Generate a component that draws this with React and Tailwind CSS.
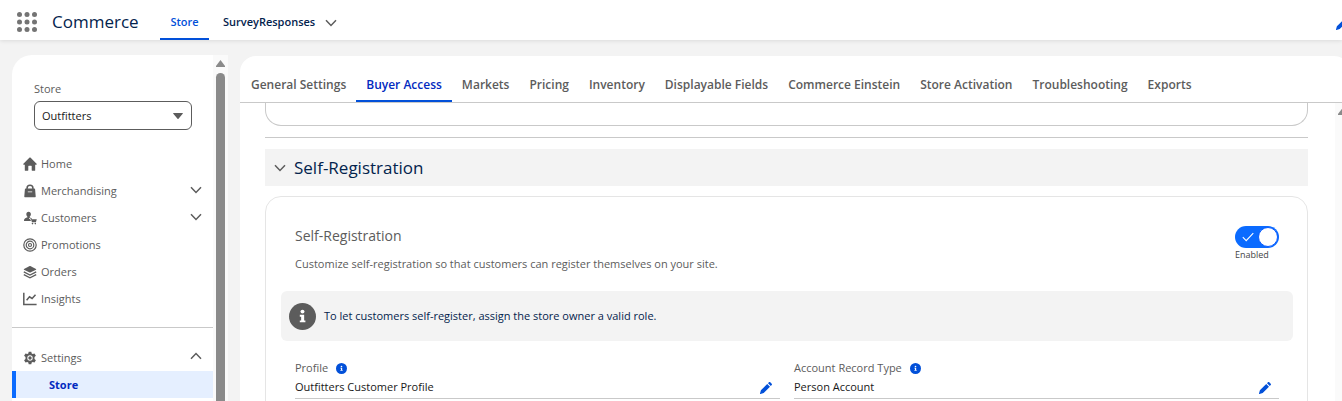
import React, { useState } from "react";

function ChevronDown({ className = "", strokeWidth = 1.5 }) {
  return (
    <svg viewBox="0 0 12 12" className={className} fill="none" stroke="currentColor" strokeWidth={strokeWidth} aria-hidden="true">
      <path d="M1 3.2 6 8.4 11 3.2" />
    </svg>
  );
}

function ChevronUp({ className = "" }) {
  return (
    <svg viewBox="0 0 12 12" className={className} fill="none" stroke="currentColor" strokeWidth="1.5" aria-hidden="true">
      <path d="M1 8.8 6 3.6 11 8.8" />
    </svg>
  );
}

function Pencil({ className = "" }) {
  return (
    <svg viewBox="0 0 12 12" className={className} fill="currentColor" aria-hidden="true">
      <path d="M.9 8.3 7.2 2l2.8 2.8-6.3 6.3L.4 12c-.3.1-.5-.1-.4-.4z" />
      <path d="M8 1.2 8.9.3c.4-.4 1-.4 1.4 0l1.4 1.4c.4.4.4 1 0 1.4l-.9.9z" />
    </svg>
  );
}

function Info({ className = "" }) {
  return (
    <svg viewBox="0 0 26 26" className={className} aria-hidden="true">
      <circle cx="13" cy="13" r="13" fill="currentColor" />
      <circle cx="13" cy="8.3" r="1.9" fill="#fff" />
      <path d="M10.4 11.4h4.2v5.4h1.2v1.8h-5.4v-1.8h1.3v-3.6h-1.3z" fill="#fff" />
    </svg>
  );
}

function HomeIcon() {
  return (
    <svg viewBox="0 0 14 14" className="size-3.5" fill="currentColor" aria-hidden="true">
      <path d="M7.4.6a.6.6 0 0 0-.8 0L.4 6.8c-.4.4-.2.9.3.9h1.1v5.5c0 .4.2.6.6.6h2.4c.3 0 .5-.2.5-.5V9.2c0-.3.2-.5.5-.5h2.4c.3 0 .5.2.5.5v4.1c0 .3.2.5.5.5h2.4c.4 0 .6-.2.6-.6V7.7h1.1c.5 0 .7-.5.3-.9z" />
    </svg>
  );
}

function BagIcon() {
  return (
    <svg viewBox="0 0 14 14" className="size-3.5" fill="currentColor" aria-hidden="true">
      <path
        fillRule="evenodd"
        d="M3.3 4.6V4.2a3.7 3.7 0 0 1 7.4 0v.4h.6c.4 0 .8.3.8.7l.6 6.9c.1.6-.3 1.1-.9 1.1H2.2c-.6 0-1-.5-.9-1.1l.6-6.9c0-.4.4-.7.8-.7zm1.5 0h4.4V4.2a2.2 2.2 0 0 0-4.4 0zM4.8 7.4v.8h4.4v-.8z"
      />
    </svg>
  );
}

function CustomersIcon() {
  return (
    <svg viewBox="0 0 14 14" className="size-3.5" fill="currentColor" aria-hidden="true">
      <path d="M5.6.8c1.4 0 2.3 1 2.3 2.4 0 .9-.4 1.7-1 2.2-.4.4-.3.9.2 1.1l.8.4H6.2v1.2h.9l.9 2H1.6c-.4 0-.6-.2-.6-.6 0-1.5.9-2.100 2.900-2.900.6-.2.7-.8.3-1.200-.5-.5-.9-1.300-.9-2.200C3.300 1.800 4.200.8 5.600.8z" />
      <path d="M7.2 7.2h1.500l.4 1h4.700l-.9 3H8.900L8 8.100h-.8z" />
      <circle cx="9.5" cy="12.600" r=".8" />
      <circle cx="12.300" cy="12.600" r=".8" />
    </svg>
  );
}

function TargetIcon() {
  return (
    <svg viewBox="0 0 14 14" className="size-3.5" fill="none" stroke="currentColor" strokeWidth="1.2" aria-hidden="true">
      <circle cx="7" cy="7" r="6.2" />
      <circle cx="7" cy="7" r="3.8" />
      <circle cx="7" cy="7" r="1.5" />
    </svg>
  );
}

function LayersIcon() {
  return (
    <svg viewBox="0 0 14 14" className="size-3.5" fill="currentColor" aria-hidden="true">
      <path d="M6.7 1.1 1 4c-.3.2-.3.5 0 .7l5.7 2.8h.6L13 4.7c.3-.2.3-.5 0-.7L7.3 1.1z" />
      <path d="M.8 6.9 7 10l6.2-3.1M.8 9.7 7 12.8l6.2-3.1" fill="none" stroke="currentColor" strokeWidth="1.3" />
    </svg>
  );
}

function InsightsIcon() {
  return (
    <svg viewBox="0 0 14 14" className="size-3.5" fill="none" stroke="currentColor" strokeWidth="1.5" aria-hidden="true">
      <path d="M.8.8v11.7h12.8" />
      <path d="M3.6 8.3 6.5 4.8l2.6 1.7 3.4-3.7" />
    </svg>
  );
}

function GearIcon() {
  return (
    <svg viewBox="0 0 14 14" className="size-3.5" fill="currentColor" aria-hidden="true">
      <path fillRule="evenodd" d="M5.7.7h2.6l.4 1.8 1 .6 1.8-.6 1.4 2.3-1.4 1.3v1.8l1.4 1.3-1.4 2.3-1.8-.6-1 .6-.4 1.8H5.7l-.4-1.8-1-.6-1.8.6-1.4-2.3 1.4-1.3V6.1L1.1 4.8l1.4-2.3 1.8.6 1-.6zM7 4.3a2.7 2.7 0 1 0 0 5.4 2.7 2.7 0 0 0 0-5.4z" />
      <circle cx="7" cy="7" r="1.7" />
    </svg>
  );
}

function Waffle() {
  const steps = [2.5, 10, 17.5];
  return (
    <svg viewBox="0 0 20 20" className="size-5 text-[#747474]" fill="currentColor" aria-hidden="true">
      {steps.map((y) => steps.map((x) => <circle key={`${x}-${y}`} cx={x} cy={y} r="2.5" />))}
    </svg>
  );
}

const NAV = [
  { label: "Home", Icon: HomeIcon },
  { label: "Merchandising", Icon: BagIcon, expandable: true },
  { label: "Customers", Icon: CustomersIcon, expandable: true },
  { label: "Promotions", Icon: TargetIcon },
  { label: "Orders", Icon: LayersIcon },
  { label: "Insights", Icon: InsightsIcon },
];

const TABS = [
  "General Settings",
  "Buyer Access",
  "Markets",
  "Pricing",
  "Inventory",
  "Displayable Fields",
  "Commerce Einstein",
  "Store Activation",
  "Troubleshooting",
  "Exports",
];

function Header() {
  return (
    <header className="z-10 flex h-10 shrink-0 items-stretch bg-white pl-[17px] shadow-[0_1px_4px_rgba(0,0,0,0.1)]">
      <button type="button" aria-label="App Launcher" className="mr-[15px] flex items-center pt-1">
        <Waffle />
      </button>
      <span className="flex w-27 items-center pt-1 text-[17px] text-[#03234d]">Commerce</span>
      <nav className="flex flex-1 items-stretch text-[11px] font-semibold">
        <a href="#store" className="flex w-[49px] items-center justify-center border-b-2 border-[#0250d9] pt-1.5 text-[#0250d9]">
          Store
        </a>
        <a href="#responses" className="flex items-center pt-1 pl-3.5 text-[#03234d]">
          SurveyResponses
        </a>
        <button type="button" aria-label="SurveyResponses list" className="pt-1.5 pl-2.5 text-[#5c5c5c]">
          <ChevronDown className="size-3" />
        </button>
      </nav>
      <button type="button" aria-label="Edit navigation" className="-mr-1.5 flex items-center pt-2 text-[#0250d9]">
        <Pencil className="size-3" />
      </button>
    </header>
  );
}

function Sidebar() {
  return (
    <aside className="ml-3 flex w-[216px] shrink-0 overflow-hidden rounded-tl-[20px] bg-white">
      <div className="flex-1 text-[11px] text-[#5c5c5c]">
        <div className="px-[22px] pt-[25px] pr-[21px]">
          <label htmlFor="store" className="block leading-[18px]">
            Store
          </label>
          <div className="relative mt-[3px]">
            <select id="store" className="block h-[29px] w-full appearance-none rounded-md border border-[#5c5c5c] bg-white px-[7px] pt-0.5 text-[11px] text-[#181818]">
              <option>Outfitters</option>
            </select>
            <svg viewBox="0 0 10 6" className="pointer-events-none absolute top-3 right-[9px] h-1.5 w-2.5" fill="#5c5c5c" aria-hidden="true">
              <path d="M.6 0h8.800c.5 0 .7.5.3.8L5.500 5.700c-.3.3-.7.300-1 0L.3.800C-.1.500.100 0 .6 0z" />
            </svg>
          </div>
        </div>
        <ul className="mt-[21px]">
          {NAV.map(({ label, Icon, expandable }) => (
            <li key={label}>
              <a href={`#${label.toLowerCase()}`} className="flex h-[27px] items-center px-[11px] pb-px">
                <Icon />
                <span className="flex-1 pt-px pl-1">{label}</span>
                {expandable && <ChevronDown className="mb-0.5 size-3" />}
              </a>
            </li>
          ))}
        </ul>
        <div className="mt-[14px] border-t border-[#c9c9c9] pt-4">
          <button type="button" aria-expanded="true" className="flex h-[27px] w-full items-center px-[11px] text-left">
            <GearIcon />
            <span className="flex-1 pt-px pl-1">Settings</span>
            <ChevronUp className="mb-1 size-3" />
          </button>
          <a href="#settings-store" aria-current="page" className="flex h-[27px] items-center border-l-4 border-[#0b6bff] bg-[#e5efff] pt-0.5 pl-[33px] font-bold text-[#022ac0]">
            Store
          </a>
        </div>
      </div>
      <div className="flex w-[15px] flex-col items-center bg-[#fafafa] pt-[5px]" aria-hidden="true">
        <svg viewBox="0 0 9 7" className="h-[7px] w-[9px] shrink-0" fill="#8a8a8a">
          <path d="M4.5 0 9 6v1H0V6z" />
        </svg>
        <div className="mt-1.5 w-[9px] flex-1 rounded-t-full bg-[#8a8a8a]" />
      </div>
    </aside>
  );
}

function Tabs() {
  return (
    <nav className="flex h-[47px] shrink-0 items-stretch border-b border-[#c9c9c9] pl-px text-xs font-semibold text-[#5c5c5c]">
      {TABS.map((tab) =>
        tab === "Buyer Access" ? (
          <a key={tab} href="#buyer-access" aria-current="page" className="flex items-center border-b-2 border-[#0250d9] px-2.5 pt-3.5 whitespace-nowrap text-[#022ac0]">
            {tab}
          </a>
        ) : (
          <a key={tab} href={`#${tab.toLowerCase().replace(" ", "-")}`} className="flex items-center border-b-2 border-transparent px-2.5 pt-3.5 whitespace-nowrap">
            {tab}
          </a>
        )
      )}
    </nav>
  );
}

function Field({ label, value }) {
  return (
    <div className="flex-1 border-b border-[#c9c9c9]">
      <dt className="flex h-5 items-center text-[11px] text-[#5c5c5c]">
        {label}
        <button type="button" aria-label={`${label} help`} className="ml-2 text-[#0250d9]">
          <Info className="size-[11px]" />
        </button>
      </dt>
      <dd className="flex h-5 items-center justify-between pr-2 text-[11px] text-[#181818]">
        <span className="pb-0.5">{value}</span>
        <button type="button" aria-label={`Edit ${label}`} className="text-[#0250d9]">
          <Pencil className="size-3" />
        </button>
      </dd>
    </div>
  );
}

function Toggle() {
  const [on, setOn] = useState(true);
  return (
    <label className="flex w-11 cursor-pointer flex-col">
      <input type="checkbox" role="switch" aria-label="Self-Registration" checked={on} onChange={() => setOn(!on)} className="peer sr-only" />
      <span className="flex h-[22px] items-center justify-between rounded-full bg-[#8a8a8a] pr-px pl-[7px] peer-checked:bg-[#0b6bff]">
        <svg viewBox="0 0 12 10" className="h-2.5 w-3" fill="none" stroke="#fff" strokeWidth="1.1" aria-hidden="true">
          <path d="M.8 5.2 4.2 8.6 11.3 1.2" />
        </svg>
        <span className="size-5 rounded-full border border-[#0b5cff] bg-white" />
      </span>
      <span className="text-[9px] leading-[14px] text-[#444444]">{on ? "Enabled" : "Disabled"}</span>
    </label>
  );
}

function Content() {
  return (
    <div className="flex min-h-0 flex-1 overflow-hidden">
      <div className="flex-1 pr-[27px] pl-[25px]">
        <div className="h-[23px] rounded-b-2xl border border-t-0 border-[#c9c9c9]" />
        <div className="mt-[11px] border-t border-[#c9c9c9]" />
        <h2 className="mt-[11px] bg-[#f3f3f3]">
          <button type="button" aria-expanded="true" className="flex h-[37px] w-full items-center pl-[9px] text-left text-[17px] text-[#03234d]">
            <ChevronDown className="mr-2 size-3 text-[#5c5c5c]" />
            Self-Registration
          </button>
        </h2>
        <section className="mt-2.5 rounded-2xl border border-[#e5e5e5] pt-[29px] pr-[14px] pb-8 pl-[15px]">
          <div className="flex justify-between px-[14px]">
            <div className="text-[#5c5c5c]">
              <h3 className="text-sm leading-5">Self-Registration</h3>
              <p className="mt-2 text-[11px] leading-5">Customize self-registration so that customers can register themselves on your site.</p>
            </div>
            <Toggle />
          </div>
          <div className="mt-[17px] flex h-[50px] items-center rounded-md bg-[#f3f3f3] pl-2 text-[11px] text-[#03234d]">
            <Info className="mr-2 size-[27px] text-[#5c5c5c]" />
            To let customers self-register, assign the store owner a valid role.
          </div>
          <dl className="mt-[17px] flex gap-[14px] px-[14px]">
            <Field label="Profile" value="Outfitters Customer Profile" />
            <Field label="Account Record Type" value="Person Account" />
          </dl>
        </section>
      </div>
      <div className="flex w-[15px] justify-center bg-[#fafafa] pt-[5px]" aria-hidden="true">
        <svg viewBox="0 0 9 7" className="h-[7px] w-[9px]" fill="#8a8a8a">
          <path d="M4.5 0 9 6v1H0V6z" />
        </svg>
      </div>
    </div>
  );
}

export default function App() {
  return (
    <div className="flex h-screen flex-col overflow-hidden bg-[#f3f3f3] font-['Open_Sans','Noto_Sans',sans-serif]">
      <Header />
      <div className="flex min-h-0 flex-1 pt-[15px]">
        <Sidebar />
        <main className="mt-px -mr-2 ml-3 flex min-w-0 flex-1 flex-col overflow-hidden rounded-t-2xl bg-white">
          <Tabs />
          <Content />
        </main>
      </div>
    </div>
  );
}
